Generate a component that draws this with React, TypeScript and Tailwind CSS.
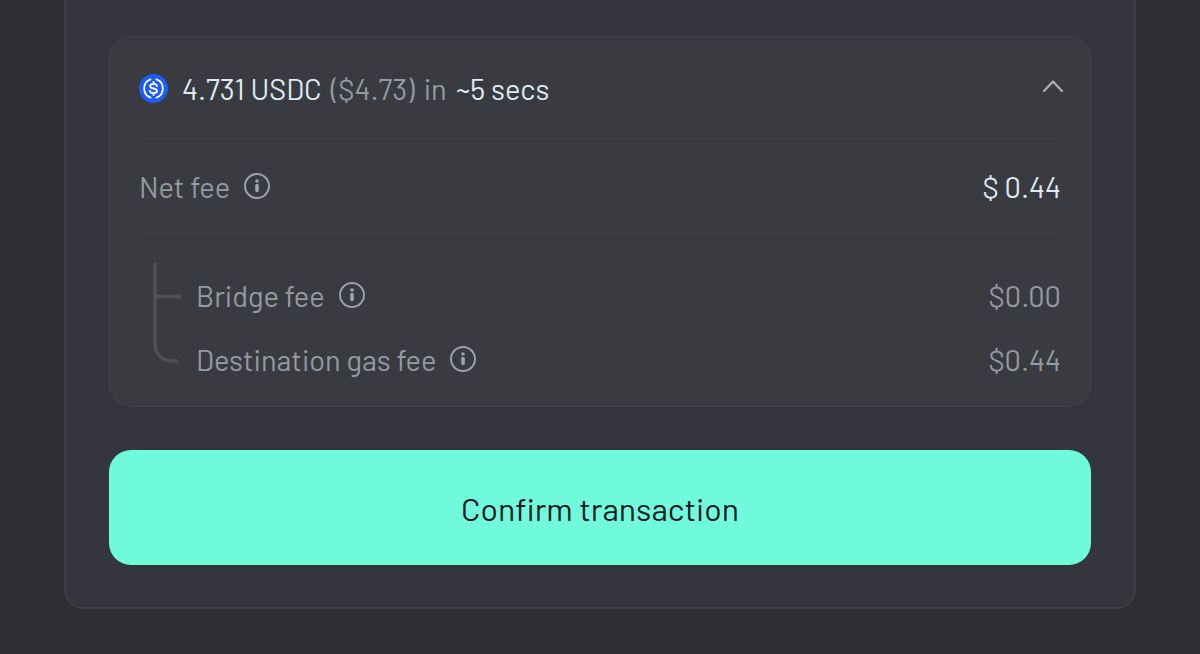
import React, { useState } from 'react';

function UsdcIcon() {
  return (
    <svg viewBox="0 0 32 32" className="size-[29px] shrink-0" fill="none" aria-hidden="true">
      <circle cx="16" cy="16" r="16" fill="#1d5cf5" />
      <g stroke="#fff" strokeWidth="2" strokeLinecap="round">
        <path d="M12.8 6A10.6 10.6 0 0 0 12.8 26" />
        <path d="M19.2 6A10.6 10.6 0 0 1 19.2 26" />
        <path d="M19.8 13.2C19.4 11.6 18 10.9 16 10.9C13.7 10.9 12.3 11.9 12.3 13.5C12.3 17.2 19.8 14.8 19.8 18.6C19.8 20.3 18.2 21.2 16 21.2C13.8 21.2 12.3 20.3 12 18.6" />
        <path d="M16 8.8V10.9M16 21.2V23.3" />
      </g>
    </svg>
  );
}

function InfoButton({ label }: { label: string }) {
  return (
    <button type="button" aria-label={label} className="mb-[2px] cursor-pointer text-[#9da3ac]">
      <svg viewBox="0 0 26 26" className="size-[26px]" fill="none">
        <circle cx="13" cy="13" r="12" stroke="currentColor" strokeWidth="1.9" />
        <circle cx="13" cy="8" r="1.8" fill="currentColor" />
        <path d="M13 12.5V17.5" stroke="currentColor" strokeWidth="3.6" strokeLinecap="round" />
      </svg>
    </button>
  );
}

const fees = [
  { name: 'Bridge fee', amount: '$0.00' },
  { name: 'Destination gas fee', amount: '$0.44' },
];

export default function App() {
  const [open, setOpen] = useState(true);

  return (
    <main className="min-h-screen bg-[#2e2f33] px-16 pb-[45px] font-['Barlow','Roboto',sans-serif] text-[29px] leading-8 font-normal text-[#949aa3]">
      <section className="rounded-b-[20px] border-x-2 border-b-2 border-[#3e3f44] bg-[#35353e] px-[43px] pt-9 pb-[42px]">
        <div className="rounded-[22px] border border-[#424347] bg-[#3a3b40] px-[29px]">
          <div className="flex h-[101px] items-center justify-between">
            <div className="flex items-center pt-[2px]">
              <UsdcIcon />
              <p className="ml-[14px] flex gap-[9px] whitespace-nowrap">
                <span className="text-[#dfeaf4]">4.731 USDC</span>
                <span>($4.73)</span>
                <span>in</span>
                <span className="text-[#dfeaf4]">~5 secs</span>
              </p>
            </div>
            <button
              type="button"
              aria-label="Toggle fee details"
              aria-expanded={open}
              onClick={() => setOpen(!open)}
              className="-mr-1 cursor-pointer text-[#a9abad]"
            >
              <svg viewBox="0 0 24 24" className={open ? 'size-6' : 'size-6 rotate-180'} fill="none">
                <path d="M3 15L12 5.5L21 15" stroke="currentColor" strokeWidth="2.4" strokeLinecap="round" strokeLinejoin="round" />
              </svg>
            </button>
          </div>

          {open && (
            <>
              <div className="flex h-[95px] items-center justify-between border-t border-[#424347] pt-[2px]">
                <div className="flex items-center gap-[14px]">
                  <span>Net fee</span>
                  <InfoButton label="About the net fee" />
                </div>
                <span className="text-[#dfeaf4]">$ 0.44</span>
              </div>

              <div className="flex border-t border-[#424347] pt-[30px] pb-[14px]">
                <svg viewBox="0 0 57 100" className="-mt-px h-[100px] w-[57px] shrink-0" fill="none" stroke="#505156" strokeWidth="3.5" aria-hidden="true">
                  <path d="M16 0V80C16 91 23 98 34 98H39" />
                  <path d="M16 33.5H42" />
                </svg>
                <ul className="flex-1">
                  {fees.map((fee) => (
                    <li key={fee.name} className="flex h-16 items-center justify-between">
                      <div className="flex items-center gap-[14px]">
                        <span>{fee.name}</span>
                        <InfoButton label={`About the ${fee.name.toLowerCase()}`} />
                      </div>
                      <span>{fee.amount}</span>
                    </li>
                  ))}
                </ul>
              </div>
            </>
          )}
        </div>

        <button
          type="button"
          className="mt-[43px] h-[115px] w-full cursor-pointer rounded-[22px] bg-[#6ffadc] text-[32px] font-normal text-[#161722]"
        >
          Confirm transaction
        </button>
      </section>
    </main>
  );
}
